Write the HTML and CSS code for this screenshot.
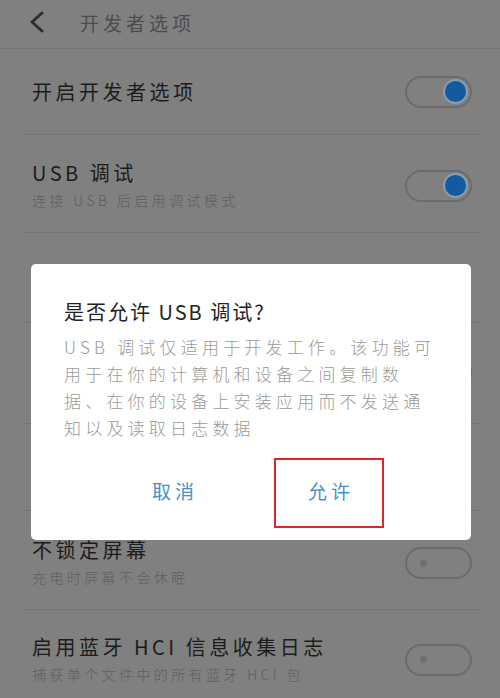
FILE: index.html
```html
<!DOCTYPE html>
<html lang="zh-CN">
<head>
<meta charset="utf-8">
<link rel="stylesheet" href="styles.css">
</head>
<body>
<div class="screen">
  <header class="topbar">
    <svg class="back" width="18" height="22" viewBox="0 0 18 22"><path d="M14 2 L4 11 L14 20" fill="none" stroke="#2e2e2e" stroke-width="3" stroke-linecap="round" stroke-linejoin="round"/></svg>
    <span class="topbar-title">开发者选项</span>
  </header>
  <div class="list">
    <div class="row r1">
      <div class="texts"><div class="title">开启开发者选项</div></div>
      <div class="switch on"><span class="knob"></span></div>
    </div>
    <div class="row r2">
      <div class="texts"><div class="title">USB 调试</div><div class="sub">连接 USB 后启用调试模式</div></div>
      <div class="switch on"><span class="knob"></span></div>
    </div>
    <div class="row r3"></div>
    <div class="row r4">
      <div class="texts"></div>
      <div class="switch"><span class="dot"></span></div>
    </div>
    <div class="row r5"></div>
    <div class="row r6">
      <div class="texts"><div class="title">不锁定屏幕</div><div class="sub">充电时屏幕不会休眠</div></div>
      <div class="switch"><span class="dot"></span></div>
    </div>
    <div class="row r7">
      <div class="texts"><div class="title">启用蓝牙 HCI 信息收集日志</div><div class="sub">捕获单个文件中的所有蓝牙 HCI 包</div></div>
      <div class="switch"><span class="dot"></span></div>
    </div>
  </div>

  <div class="dialog">
    <div class="dlg-title">是否允许 USB 调试?</div>
    <div class="dlg-body">USB 调试仅适用于开发工作。该功能可<br>用于在你的计算机和设备之间复制数<br>据、在你的设备上安装应用而不发送通<br>知以及读取日志数据</div>
    <div class="dlg-buttons">
      <div class="btn">取消</div>
      <div class="btn marked">允许</div>
    </div>
  </div>
</div>
</body>
</html>
```

FILE: styles.css
```css
* { box-sizing: border-box; }
html, body { margin: 0; padding: 0; }
body {
  width: 500px;
  height: 698px;
  overflow: hidden;
  background: #808080;
  font-family: "Noto Sans CJK SC", "Noto Sans", sans-serif;
}
.screen {
  position: relative;
  width: 500px;
  height: 698px;
  overflow: hidden;
  background: #808080;
}
.topbar {
  height: 49px;
  border-bottom: 1px solid #747474;
  display: flex;
  align-items: center;
  padding: 0 0 4px 28px;
}
.back { display: block; }
.topbar-title {
  margin-left: 34px;
  font-size: 19px;
  letter-spacing: 4px;
  color: #4c4c4c;
  font-weight: 400;
}
.list {
  margin: 0 20px 0 23px;
}
.row {
  display: flex;
  align-items: center;
  justify-content: space-between;
  border-bottom: 1px solid #757575;
  padding: 0 8px 0 9px;
}
.r1 { height: 86px; }
.r2 { height: 98px; padding-top: 4px; }
.r3 { height: 90px; }
.r4 { height: 101px; }
.r5 { height: 87px; }
.r6 { height: 99px; padding-top: 6px; }
.r7 { height: 99px; border-bottom: none; }
.title {
  font-size: 20px;
  line-height: 28px;
  letter-spacing: 3.5px;
  color: #1c1c1c;
}
.sub {
  font-size: 14px;
  line-height: 26px;
  letter-spacing: 3.4px;
  color: #5f5f5f;
  font-weight: 300;
}
.switch {
  position: relative;
  width: 67px;
  height: 32px;
  border: 2px solid #6b6b6b;
  border-radius: 16px;
  flex: none;
  display: flex;
  align-items: center;
}
.switch.on { justify-content: flex-end; padding-right: 4px; }
.knob {
  width: 21px;
  height: 21px;
  border-radius: 50%;
  background: #145a9e;
  box-shadow: 0 0 0 2px #8a9cae;
}
.switch .dot {
  width: 7px;
  height: 7px;
  border-radius: 50%;
  background: #6e6e6e;
  margin-left: 13px;
}
.dialog {
  position: absolute;
  left: 31px;
  top: 264px;
  width: 440px;
  height: 276px;
  background: #ffffff;
  border-radius: 5px;
  padding: 34px 20px 0 33px;
}
.dlg-title {
  font-size: 20px;
  line-height: 28px;
  letter-spacing: 2px;
  color: #222222;
}
.dlg-body {
  margin-top: 7px;
  font-size: 17px;
  line-height: 27px;
  letter-spacing: 4.2px;
  color: #9a9a9a;
  font-weight: 300;
  white-space: nowrap;
}
.dlg-buttons {
  margin: 17px 0 0 -33px;
  width: 440px;
  display: flex;
  justify-content: center;
  gap: 46px;
}
.btn {
  width: 110px;
  height: 70px;
  display: flex;
  align-items: center;
  justify-content: center;
  font-size: 19px;
  letter-spacing: 4px;
  text-indent: 4px;
  color: #4a8fc4;
  padding-bottom: 6px;
}
.btn.marked {
  border: 2px solid #e0262b;
}
```
